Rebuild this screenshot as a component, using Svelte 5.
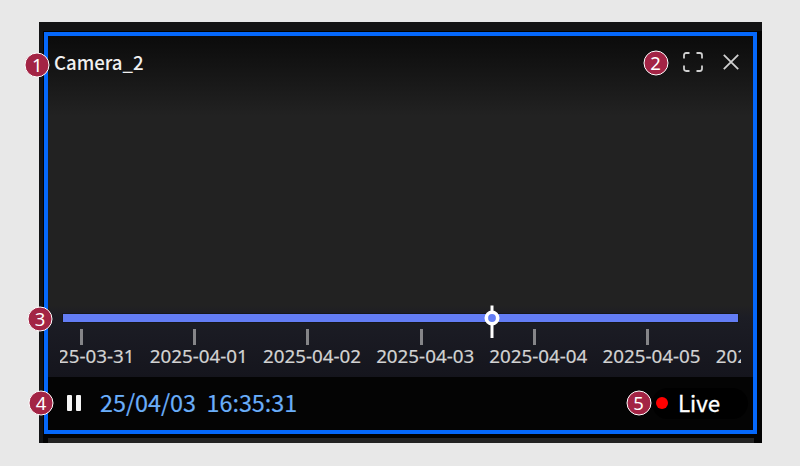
<script>
  const dates = ['2025-03-31', '2025-04-01', '2025-04-02', '2025-04-03', '2025-04-04', '2025-04-05', '2025-04-06'];
  const badges = [
    { n: 1, x: 37.3, y: 64.5 },
    { n: 2, x: 655.5, y: 62.5 },
    { n: 3, x: 40, y: 318.5 },
    { n: 4, x: 41, y: 402.5 },
    { n: 5, x: 638.5, y: 402.5 }
  ];
</script>

<main>
  <div class="shell">
    <section class="camera">
      <header>
        <h1>Camera_2</h1>
        <div class="actions">
          <svg width="22" height="22" viewBox="0 0 22 22" fill="none" stroke="#cfcfcf" stroke-width="1.8">
            <path d="M2 7.5V4.2Q2 2 4.2 2H7.5M14.5 2h3.3Q20 2 20 4.2V7.5M20 14.5v3.3Q20 20 17.8 20H14.5M7.5 20H4.2Q2 20 2 17.8V14.5" />
          </svg>
          <svg class="close" width="18" height="18" viewBox="0 0 18 18" fill="none" stroke="#d0d0d0" stroke-width="1.8">
            <path d="M1.8 1.8l14.4 14.4M16.2 1.8L1.8 16.2" />
          </svg>
        </div>
      </header>
      <div class="view"></div>
      <div class="timeline">
        <div class="track">
          <svg class="handle" width="18" height="36" viewBox="0 0 18 36">
            <path d="M9 1.5V34" stroke="#fff" stroke-width="3" />
            <circle cx="9" cy="14" r="5.7" fill="#637df5" stroke="#fff" stroke-width="3.6" />
          </svg>
        </div>
        <div class="scale">
          <div class="strip">
            {#each dates as date}
              <div class="cell"><i></i><span>{date}</span></div>
            {/each}
          </div>
        </div>
      </div>
      <footer>
        <div class="pause"><i></i><i></i></div>
        <time>25/04/03&nbsp; 16:35:31</time>
        <div class="live"><i></i><span>Live</span></div>
      </footer>
    </section>
    <div class="below"></div>
  </div>
  {#each badges as b}
    <div class="badge" style="left:{b.x}px;top:{b.y}px">{b.n}</div>
  {/each}
</main>

<style>
  main {
    position: relative;
    box-sizing: border-box;
    width: 800px;
    height: 466px;
    padding: 22px 38px 23px 39px;
    background: #e8e8e8;
    font-family: "Noto Sans CJK KR", "Noto Sans", sans-serif;
    overflow: hidden;
  }
  .shell {
    box-sizing: border-box;
    height: 421px;
    padding: 9.5px 5px 0;
    background: linear-gradient(#131314 0 9px, transparent 9px), linear-gradient(90deg, #121315 0 4px, #020202 4px);
    overflow: hidden;
  }
  .camera {
    box-sizing: border-box;
    display: flex;
    flex-direction: column;
    height: 402px;
    border: 4px solid #0568fb;
    background: linear-gradient(#0b0b0b, #222 80px);
  }
  header {
    display: flex;
    justify-content: space-between;
    height: 54px;
    padding: 0 13.5px 0 6px;
  }
  h1 {
    margin: 10px 0 0;
    color: #f0f0f0;
    font-size: 18.6px;
    font-weight: 500;
    line-height: 32px;
    white-space: nowrap;
  }
  .actions {
    display: flex;
    gap: 18px;
    padding-top: 15.5px;
  }
  .close { margin-top: 2px; }
  .view { flex: 1; }
  .timeline {
    height: 72px;
    padding: 9.5px 15px 0;
    background: linear-gradient(#222 0, #1c1d25 12px, #15151d);
    box-sizing: border-box;
  }
  .track {
    position: relative;
    height: 8px;
    background: #637df5;
    box-shadow: 0 0 0 1px #16171b;
  }
  .handle {
    position: absolute;
    left: 420px;
    top: -10px;
  }
  .scale {
    width: 681px;
    height: 52px;
    margin-left: -3px;
    overflow: hidden;
  }
  .strip {
    display: flex;
    width: 793px;
    margin-left: -31px;
  }
  .cell {
    display: flex;
    flex: 0 0 113.2px;
    flex-direction: column;
    align-items: center;
    padding-top: 7px;
  }
  .cell i {
    width: 3px;
    height: 16px;
    margin-right: 8px;
    background: #858588;
  }
  .cell span {
    margin-top: -1px;
    color: #d2d2d2;
    font-family: "Noto Sans", sans-serif;
    font-size: 18.8px;
    line-height: 24px;
    white-space: nowrap;
    -webkit-text-stroke: 0.2px #d2d2d2;
  }
  footer {
    display: flex;
    align-items: center;
    height: 53px;
    padding: 0 5px 0 19px;
    background: #040404;
  }
  .pause {
    display: flex;
    gap: 4px;
  }
  .pause i {
    width: 5px;
    height: 16px;
    border-radius: 1px;
    background: #f5f5f5;
  }
  time {
    margin: -2px 0 0 19px;
    color: #6aaefa;
    font-size: 23.35px;
    line-height: 34px;
    white-space: nowrap;
    -webkit-text-stroke: 0.2px #6aaefa;
  }
  .live {
    display: flex;
    align-items: center;
    box-sizing: border-box;
    width: 96px;
    height: 31px;
    margin-left: auto;
    padding-left: 3.5px;
    border-radius: 16px;
    background: #000;
    color: #fff;
    font-size: 22.3px;
  }
  .live span {
    margin-top: -3px;
    -webkit-text-stroke: 0.3px #fff;
  }
  .live i {
    width: 12px;
    height: 12px;
    margin-right: 10.5px;
    border-radius: 50%;
    background: #f00;
  }
  .below {
    height: 10px;
    margin: 4px 3px 0 4px;
    background: #222;
  }
  .badge {
    position: absolute;
    box-sizing: border-box;
    width: 25px;
    height: 25px;
    border: 1px solid #fff;
    border-radius: 50%;
    background: #a32445;
    color: #fff;
    font: 18.5px/21px "Noto Sans", sans-serif;
    text-align: center;
    transform: translate(-50%, -50%);
  }
</style>
